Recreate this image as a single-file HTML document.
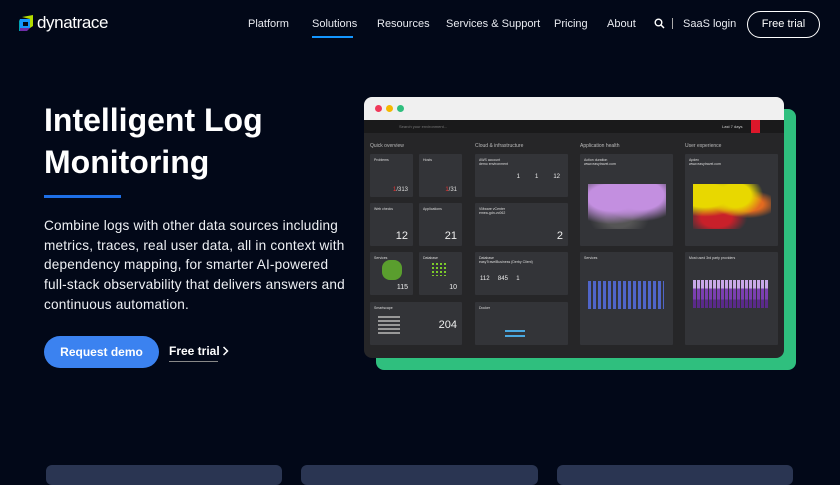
<!DOCTYPE html>
<html><head><meta charset="utf-8"><style>
*{margin:0;padding:0;box-sizing:border-box}
body{width:840px;height:472px;overflow:hidden;background:#020818;font-family:"Liberation Sans",sans-serif;color:#fff;position:relative}
.a{position:absolute}
.nav{font-size:11px;color:#e8eaf0;top:18px}
.t{background:#333438;position:absolute;border-radius:1px}
.ct{position:absolute;font-size:5px;color:#bbb;top:143px}
.tt{position:absolute;font-size:3.5px;color:#ddd;left:4px;top:4px}
.big{position:absolute;font-size:11px;color:#eee;right:5px;bottom:4px}
</style></head><body>
<svg class="a" style="left:19px;top:15px" width="16" height="17" viewBox="0 0 16 17">
<polygon points="3,2 14,0 14,11 11,13 11,4" fill="#b4dc00"/>
<polygon points="1,4 11,4 11,13 1,13" fill="#1496ff"/>
<polygon points="1,13 11,13 8,16 0,16" fill="#6f2da8"/>
<polygon points="0,6 1,4 1,16 0,16" fill="#00a1b2"/>
<rect x="4" y="7" width="5" height="4" fill="#020818"/>
</svg>
<div class="a" style="left:37px;top:13px;font-size:17px;letter-spacing:-0.4px;color:#fff">dynatrace</div>
<div class="a nav" style="left:248px">Platform</div>
<div class="a nav" style="left:312px">Solutions</div>
<div class="a" style="left:312px;top:36px;width:41px;height:2px;background:#1496ff"></div>
<div class="a nav" style="left:377px">Resources</div>
<div class="a nav" style="left:446px">Services &amp; Support</div>
<div class="a nav" style="left:554px">Pricing</div>
<div class="a nav" style="left:607px">About</div>
<svg class="a" style="left:654px;top:18px" width="11" height="11" viewBox="0 0 11 11"><circle cx="4.5" cy="4.5" r="3.3" stroke="#fff" stroke-width="1.4" fill="none"/><line x1="7" y1="7" x2="10" y2="10" stroke="#fff" stroke-width="1.5"/></svg>
<div class="a" style="left:672px;top:18px;width:1px;height:11px;background:#aaa"></div>
<div class="a nav" style="left:683px">SaaS login</div>
<div class="a" style="left:747px;top:11px;width:73px;height:27px;border:1.5px solid #fff;border-radius:14px;font-size:11px;text-align:center;line-height:24px">Free trial</div>

<div class="a" style="left:44px;top:99px;font-size:32px;font-weight:bold;line-height:42px">Intelligent Log<br>Monitoring</div>
<div class="a" style="left:44px;top:195px;width:77px;height:3px;background:#1e6fe6"></div>
<div class="a" style="left:44px;top:216px;font-size:13.6px;line-height:19.7px;color:#eef0f4;letter-spacing:0.2px;width:308px">Combine logs with other data sources including metrics, traces, real user data, all in context with dependency mapping, for smarter AI-powered full-stack observability that delivers answers and continuous automation.</div>
<div class="a" style="left:44px;top:336px;width:115px;height:32px;background:#3b82f0;border-radius:16px;font-size:12px;font-weight:bold;text-align:center;line-height:32px">Request demo</div>
<div class="a" style="left:169px;top:344px;font-size:12px;font-weight:bold">Free trial</div>
<div class="a" style="left:169px;top:361px;width:49px;height:1px;background:#888"></div>
<svg class="a" style="left:222px;top:346px" width="7" height="10" viewBox="0 0 7 10"><polyline points="1.5,1 5.5,5 1.5,9" stroke="#fff" stroke-width="1.5" fill="none"/></svg>

<div class="a" style="left:376px;top:109px;width:420px;height:261px;background:#2fbf7e;border-radius:8px"></div>
<div class="a" style="left:364px;top:97px;width:420px;height:261px;background:#262628;border-radius:8px;overflow:hidden">
<div class="a" style="left:0;top:0;width:420px;height:23px;background:#f0f0f0"></div>
<div class="a" style="left:11px;top:8px;width:7px;height:7px;border-radius:50%;background:#f0385a"></div>
<div class="a" style="left:22px;top:8px;width:7px;height:7px;border-radius:50%;background:#f5b800"></div>
<div class="a" style="left:33px;top:8px;width:7px;height:7px;border-radius:50%;background:#2fbf7e"></div>
<div class="a" style="left:0;top:23px;width:420px;height:13px;background:#1a1a1b"></div>
<div class="a" style="left:35px;top:27px;font-size:4px;color:#777">Search your environment...</div>
<div class="a" style="left:358px;top:27px;font-size:4px;color:#ccc">Last 7 days</div>
<div class="a" style="left:387px;top:23px;width:9px;height:13px;background:#dc172a"></div>
</div>
<div class="ct" style="left:370px">Quick overview</div>
<div class="ct" style="left:475px">Cloud &amp; infrastructure</div>
<div class="ct" style="left:580px">Application health</div>
<div class="ct" style="left:685px">User experience</div>

<div class="t" style="left:370px;top:154px;width:43px;height:43px"><div class="tt">Problems</div><div class="big" style="font-size:6px;color:#e33">1<span style="color:#ddd">/313</span></div></div>
<div class="t" style="left:419px;top:154px;width:43px;height:43px"><div class="tt">Hosts</div><div class="big" style="font-size:6px;color:#e33">1<span style="color:#ddd">/31</span></div></div>
<div class="t" style="left:370px;top:203px;width:43px;height:43px"><div class="tt">Web checks</div><div class="big">12</div></div>
<div class="t" style="left:419px;top:203px;width:43px;height:43px"><div class="tt">Applications</div><div class="big">21</div></div>
<div class="t" style="left:370px;top:252px;width:43px;height:43px"><div class="tt">Services</div><div class="a" style="left:12px;top:8px;width:20px;height:20px;background:#5a9e2e;border-radius:40%"></div><div class="big" style="font-size:7px">115</div></div>
<div class="t" style="left:419px;top:252px;width:43px;height:43px"><div class="tt">Database</div><div class="a" style="left:12px;top:10px;width:16px;height:14px;background:radial-gradient(circle,#7ccc2a 40%,transparent 45%) 0 0/4px 4px"></div><div class="big" style="font-size:7px">10</div></div>
<div class="t" style="left:370px;top:302px;width:92px;height:43px"><div class="tt">Smartscape</div><div class="a" style="left:8px;top:14px;width:22px;height:20px;background:repeating-linear-gradient(#999 0 2px,transparent 2px 4px)"></div><div class="big" style="top:17px;font-size:11px">204</div></div>

<div class="t" style="left:475px;top:154px;width:93px;height:43px"><div class="tt">AWS account<br>demo environment</div><div class="big" style="font-size:6px;right:8px;top:20px">1 &nbsp; &nbsp; &nbsp; &nbsp; 1 &nbsp; &nbsp; &nbsp; &nbsp; 12</div></div>
<div class="t" style="left:475px;top:203px;width:93px;height:43px"><div class="tt">VMware vCenter<br>emea-gdn-vc062</div><div class="big">2</div></div>
<div class="t" style="left:475px;top:252px;width:93px;height:43px"><div class="tt">Database<br>easyTravelBusiness (Derby Client)</div><div class="big" style="left:5px;right:auto;top:24px;font-size:6px">112 &nbsp; &nbsp; 845 &nbsp; &nbsp; 1</div></div>
<div class="t" style="left:475px;top:302px;width:93px;height:43px"><div class="tt">Docker</div><div class="a" style="left:30px;top:28px;width:20px;height:2px;background:#4aa8e0"></div><div class="a" style="left:30px;top:33px;width:20px;height:2px;background:#4aa8e0"></div></div>

<div class="t" style="left:580px;top:154px;width:93px;height:92px"><div class="tt">Action duration<br>www.easytravel.com</div>
<div class="a" style="left:8px;top:30px;width:78px;height:45px;background:radial-gradient(ellipse at 30% 30%,#c38fe0 30%,transparent 60%),radial-gradient(ellipse at 68% 25%,#c38fe0 30%,transparent 55%),radial-gradient(ellipse at 40% 75%,#555 20%,transparent 45%)"></div></div>
<div class="t" style="left:580px;top:252px;width:93px;height:93px"><div class="tt">Services</div>
<div class="a" style="left:8px;top:29px;width:76px;height:28px;background:repeating-linear-gradient(90deg,#5065c8 0 3px,transparent 3px 5px)"></div></div>

<div class="t" style="left:685px;top:154px;width:93px;height:92px"><div class="tt">Apdex<br>www.easytravel.com</div>
<div class="a" style="left:8px;top:30px;width:78px;height:45px;background:radial-gradient(ellipse at 15% 25%,#e8d800 25%,transparent 45%),radial-gradient(ellipse at 55% 25%,#e8d800 25%,transparent 45%),radial-gradient(ellipse at 70% 45%,#e26a20 20%,transparent 40%),radial-gradient(ellipse at 30% 75%,#c8202a 20%,transparent 40%)"></div></div>
<div class="t" style="left:685px;top:252px;width:93px;height:93px"><div class="tt">Most used 3rd party providers</div>
<div class="a" style="left:8px;top:28px;width:76px;height:28px;background:linear-gradient(#c9a8e8 0 30%,#7b3fb0 30% 70%,#5a2a8a 70%)"></div>
<div class="a" style="left:8px;top:28px;width:76px;height:28px;background:repeating-linear-gradient(90deg,transparent 0 3px,#333438 3px 4px)"></div></div>

<div class="a" style="left:46px;top:465px;width:236px;height:20px;background:#2a3552;border-radius:6px"></div>
<div class="a" style="left:301px;top:465px;width:237px;height:20px;background:#2a3552;border-radius:6px"></div>
<div class="a" style="left:557px;top:465px;width:236px;height:20px;background:#2a3552;border-radius:6px"></div>
</body></html>
